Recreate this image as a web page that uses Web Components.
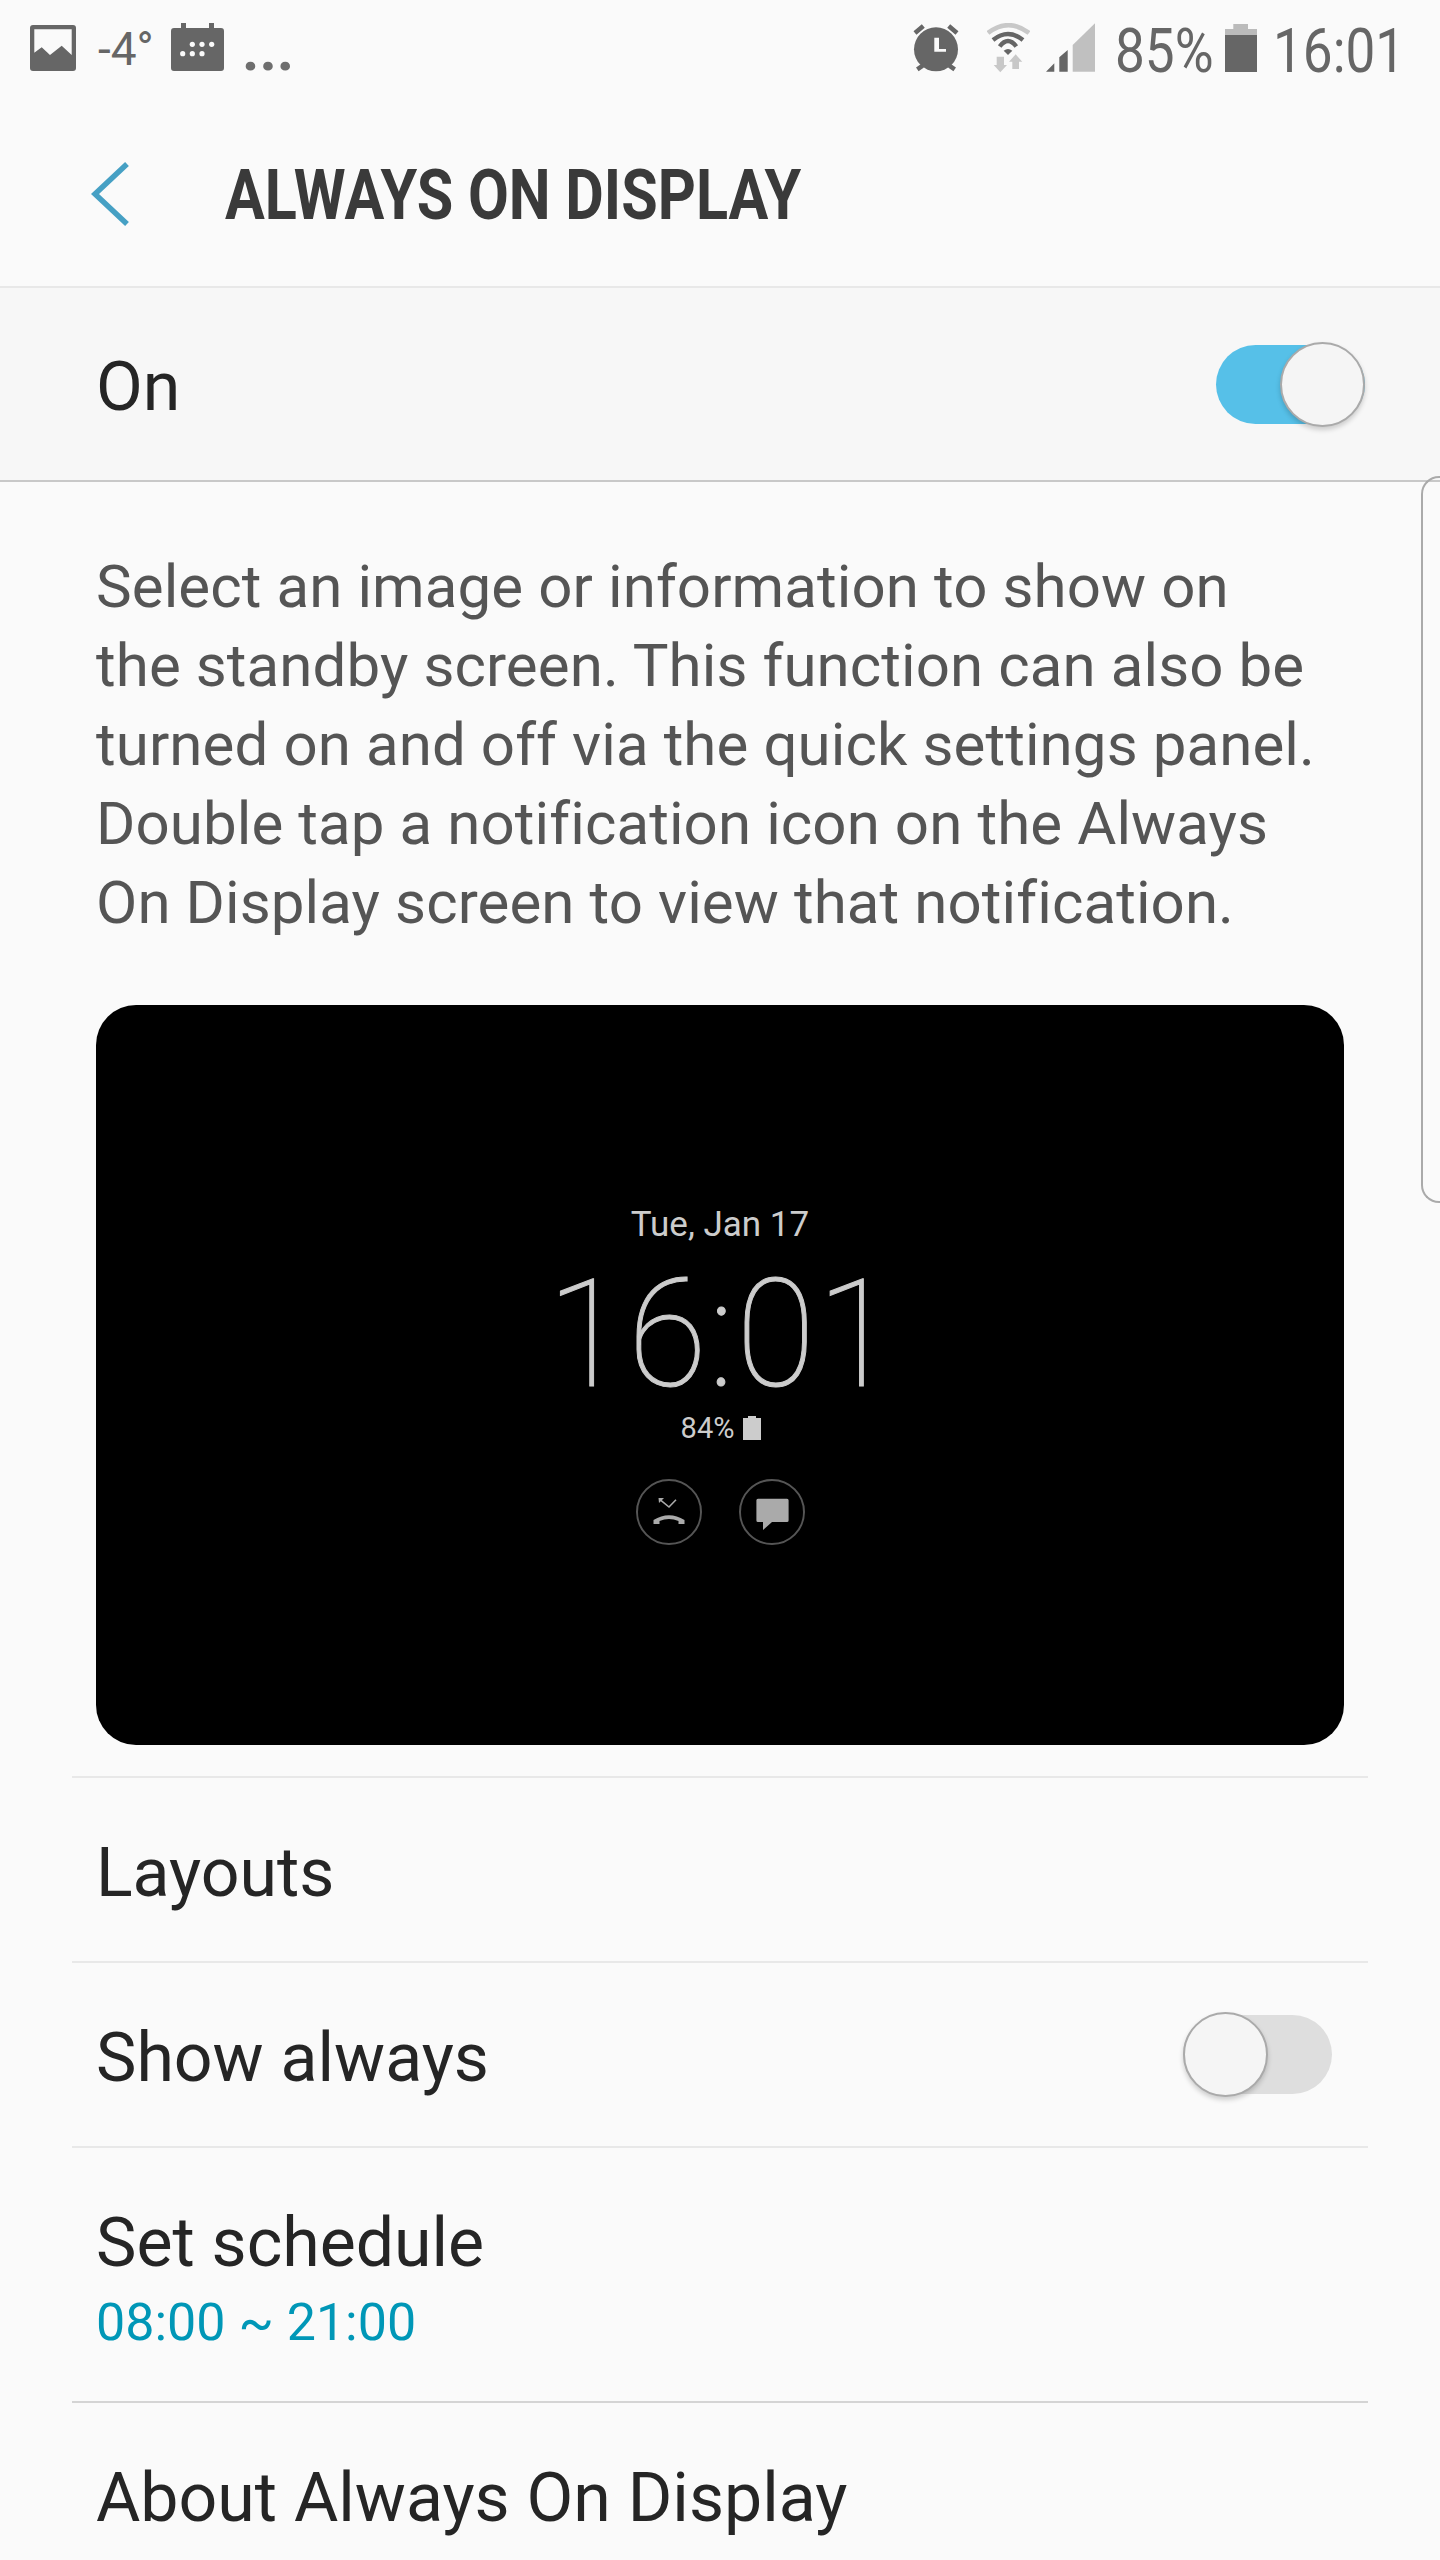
<!DOCTYPE html>
<html>
<head>
<meta charset="utf-8">
<style>
  html, body { margin: 0; padding: 0; background: #fafafa; }
  body { width: 1440px; height: 2560px; overflow: hidden; position: relative; font-family: Roboto, "Liberation Sans", sans-serif; }
</style>
</head>
<body>
<status-bar></status-bar>
<app-bar>ALWAYS ON DISPLAY</app-bar>
<master-row>On</master-row>
<help-text>Select an image or information to show on the standby screen. This function can also be turned on and off via the quick settings panel. Double tap a notification icon on the Always On Display screen to view that notification.</help-text>
<aod-preview></aod-preview>
<list-row>Layouts</list-row>
<list-row toggle>Show always</list-row>
<list-row sub="08:00 ~ 21:00">Set schedule</list-row>
<list-row dark>About Always On Display</list-row>
<edge-handle></edge-handle>

<script>
class StatusBar extends HTMLElement {
  connectedCallback() {
    this.attachShadow({ mode: 'open' });
    this.shadowRoot.innerHTML = `<style>
      :host { display: flex; justify-content: space-between; align-items: flex-start; height: 96px; box-sizing: border-box; padding: 23px 36px 0 30px; color: #666; }
      .side { display: flex; align-items: flex-start; }
      svg { display: block; flex: none; }
      .temp { font-size: 46px; line-height: 46px; margin: 3px 19px 0 22px; width: 54px; white-space: nowrap; }
      .dots { font-size: 60px; line-height: 60px; margin: -3px 0 0 18px; font-weight: 700; color: #6e6e6e; }
      .big { font-size: 61px; line-height: 60px; white-space: nowrap; display: block; transform-origin: left top; }
      .pct { width: 110px; margin: -2px 0 0 20px; }
      .pct .big { transform: scaleX(.87); }
      .clock { width: 131px; margin: -2px 0 0 16px; }
      .clock .big { transform: scaleX(.87); }
    </style>
    <div class="side">
      <svg width="46" height="46" viewBox="0 0 46 46" style="margin-top:2px"><rect width="46" height="46" rx="3" fill="#666"/><path d="M4.3 4.3H41.7V30L31.7 20.7 20 30 11.7 22.3 4.3 27.7Z" fill="#fafafa"/></svg>
      <span class="temp">-4°</span>
      <svg width="53" height="48" viewBox="0 0 53 48"><path d="M10 0h5v5h23V0h5v5h7a3 3 0 0 1 3 3v37a3 3 0 0 1-3 3H3a3 3 0 0 1-3-3V8a3 3 0 0 1 3-3h7Z" fill="#666"/><g fill="#fafafa"><circle cx="21.3" cy="21.3" r="2.6"/><circle cx="31" cy="21.3" r="2.6"/><circle cx="40.7" cy="21.3" r="2.6"/><circle cx="11.7" cy="30.7" r="2.6"/><circle cx="21.3" cy="30.7" r="2.6"/><circle cx="31" cy="30.7" r="2.6"/></g></svg>
      <span class="dots">...</span>
    </div>
    <div class="side">
      <svg width="48" height="49" viewBox="0 0 48 49"><circle cx="23" cy="26.3" r="22" fill="#666"/><path d="M2 10 10.3 3M44 10 35.7 3M4.3 46.3 9.7 42.7M41.7 46.3 36.3 42.7" stroke="#666" stroke-width="4.6" fill="none"/><path d="M21.3 14.7H26V26H33V28.7H21.3Z" fill="#fafafa"/></svg>
      <svg width="43" height="50" viewBox="0 0 43 50" style="margin-left:26px"><path d="M1 10Q21.5-5.6 42 10" stroke="#c8c8c8" stroke-width="4.6" fill="none"/><path d="M6 17Q21 5 36 17M12.7 23.5Q21 12.5 29.3 23.5" stroke="#666" stroke-width="4.4" fill="none"/><path d="M21 32 16.7 27.7Q21 24.5 25.3 27.7Z" fill="#666"/><path d="M9.7 33.7H17V42H20L13.3 49.3 6.7 42H9.7ZM28.7 31.3 35.3 38.7H32V46H25.3V38.7H22Z" fill="#c8c8c8"/></svg>
      <svg width="49" height="49" viewBox="0 0 49 49" style="margin-left:16px"><path d="M0 48.7 8.3 40.3V48.7ZM13.3 48.7V34.3L21.7 27V48.7Z" fill="#666"/><path d="M26.7 48.7V22L49 .3V48.7Z" fill="#c0c0c0"/></svg>
      <div class="pct"><span class="big">85%</span></div>
      <svg width="32" height="48" viewBox="0 0 32 48" style="margin-top:1px"><path d="M8.3 0H23V5H32V11H0V5H8.3Z" fill="#bbb"/><rect y="11" width="32" height="37" fill="#666"/></svg>
      <div class="clock"><span class="big">16:01</span></div>
    </div>`;
  }
}

class AppBar extends HTMLElement {
  connectedCallback() {
    this.attachShadow({ mode: 'open' });
    this.shadowRoot.innerHTML = `<style>
      :host { display: flex; align-items: center; height: 192px; box-sizing: border-box; padding-left: 91px; border-bottom: 2px solid #e8e8e8; }
      svg { display: block; margin: 6px 96px 0 0; flex: none; }
      .title { font-size: 70px; font-weight: 700; color: #3a3a3a; white-space: nowrap; transform: scaleX(.847); transform-origin: left center; margin-top: 7px; }
    </style>
    <svg width="38" height="66" viewBox="0 0 38 66"><path d="M36 3 4 33 36 63" fill="none" stroke="#46a0c4" stroke-width="5.5"/></svg>
    <span class="title"><slot></slot></span>`;
  }
}

class ToggleSwitch extends HTMLElement {
  connectedCallback() {
    this.attachShadow({ mode: 'open' });
    this.shadowRoot.innerHTML = `<style>
      :host { display: block; position: relative; width: 149px; height: 79px; margin-top: -6px; border-radius: 40px; background: #dedede; flex: none; }
      :host([checked]) { background: #56c0e8; }
      .thumb { position: absolute; top: -3px; left: 0; width: 85px; height: 85px; box-sizing: border-box; border-radius: 50%; background: #f5f5f5; border: 2px solid #aaa; box-shadow: 0 3px 5px rgba(0,0,0,.18); }
      :host([checked]) .thumb { left: 64px; }
    </style><div class="thumb"></div>`;
  }
}

class MasterRow extends HTMLElement {
  connectedCallback() {
    this.attachShadow({ mode: 'open' });
    this.shadowRoot.innerHTML = `<style>
      :host { display: flex; justify-content: space-between; align-items: center; height: 194px; box-sizing: border-box; padding: 6px 75px 0 96px; background: #f7f7f7; border-bottom: 2px solid #c8c8c8; font-size: 68px; color: #252525; }
    </style><span><slot></slot></span><toggle-switch checked></toggle-switch>`;
  }
}

class HelpText extends HTMLElement {
  connectedCallback() {
    this.attachShadow({ mode: 'open' });
    this.shadowRoot.innerHTML = `<style>
      :host { display: block; padding: 65px 118px 63px 96px; font-size: 60px; line-height: 79px; letter-spacing: .1px; color: #555; }
    </style><slot></slot>`;
  }
}

class AodPreview extends HTMLElement {
  connectedCallback() {
    this.attachShadow({ mode: 'open' });
    this.shadowRoot.innerHTML = `<style>
      :host { display: flex; flex-direction: column; align-items: center; justify-content: center; width: 1248px; height: 740px; margin: 0 0 31px 96px; border-radius: 40px; background: #000; color: #ccc; }
      .date { font-size: 35px; line-height: 40px; }
      .time { font-size: 150px; line-height: 132px; margin: 24px 0 0 6px; font-weight: 100; -webkit-text-stroke: 1px #ccc; transform: scaleX(.96); letter-spacing: 2px; }
      .batt { display: flex; align-items: center; font-size: 29px; line-height: 32px; margin: 11px 0 0 2px; gap: 9px; }
      .icons { display: flex; gap: 37px; margin-top: 35px; }
      .icons div { width: 66px; height: 66px; box-sizing: border-box; border: 2px solid #555; border-radius: 50%; }
      svg { display: block; }
      .icons svg { margin: -2px; }
    </style>
    <div class="date">Tue, Jan 17</div>
    <div class="time">16:01</div>
    <div class="batt"><span>84%</span><svg width="18" height="24" viewBox="0 0 18 24"><path d="M5 0H13V2H18V24H0V2H5Z" fill="#ccc"/></svg></div>
    <div class="icons">
      <div><svg width="66" height="66" viewBox="0 0 66 66"><path d="M24 20.7 33 28 40 20.7" fill="none" stroke="#aaa" stroke-width="1.6"/><path d="M22.5 19H28L23 24Z" fill="#aaa"/><path d="M17.5 45V41Q33 31.6 48.5 41V45H42.5V42Q33 38 23.5 42V45Z" fill="#aaa"/></svg></div>
      <div><svg width="66" height="66" viewBox="0 0 66 66"><path d="M19 19.7H48A1.6 1.6 0 0 1 49.6 21.3V41.4A1.6 1.6 0 0 1 48 43H33L24 51V43H19A1.6 1.6 0 0 1 17.4 41.4V21.3A1.6 1.6 0 0 1 19 19.7Z" fill="#aaa"/></svg></div>
    </div>`;
  }
}

class ListRow extends HTMLElement {
  connectedCallback() {
    let sub = this.getAttribute('sub');
    let hasToggle = this.hasAttribute('toggle');
    this.attachShadow({ mode: 'open' });
    this.shadowRoot.innerHTML = `<style>
      :host { display: flex; justify-content: space-between; align-items: center; box-sizing: border-box; height: 185px; margin: 0 72px; padding: 6px 36px 0 24px; border-top: 2px solid #e8e8e8; color: #252525; font-size: 68px; }
      :host([sub]) { height: 255px; padding-top: 8px; }
      :host([dark]) { border-top-color: #d4d4d4; }
      .sub { font-size: 52px; line-height: 60px; margin-top: 12px; color: #0097b7; }
      .main { line-height: 76px; white-space: nowrap; }
    </style>
    <div><div class="main"><slot></slot></div>${sub ? `<div class="sub">${sub}</div>` : ''}</div>
    ${hasToggle ? '<toggle-switch></toggle-switch>' : ''}`;
  }
}

class EdgeHandle extends HTMLElement {
  connectedCallback() {
    this.attachShadow({ mode: 'open' });
    this.shadowRoot.innerHTML = `<style>
      :host { position: absolute; display: block; left: 1421px; top: 476px; width: 19px; height: 727px; box-sizing: border-box; border: 2px solid #aaa; border-right: 0; border-radius: 18px 0 0 18px; }
    </style>`;
  }
}

customElements.define('status-bar', StatusBar);
customElements.define('app-bar', AppBar);
customElements.define('toggle-switch', ToggleSwitch);
customElements.define('master-row', MasterRow);
customElements.define('help-text', HelpText);
customElements.define('aod-preview', AodPreview);
customElements.define('list-row', ListRow);
customElements.define('edge-handle', EdgeHandle);
</script>
</body>
</html>
